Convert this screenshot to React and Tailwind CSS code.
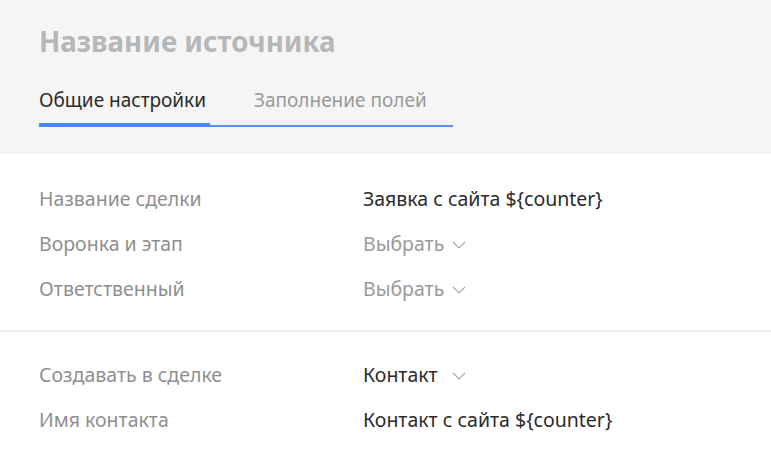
import React from 'react';

const Chevron = ({ className = 'ml-2' }) => (
  <svg width="14" height="8" viewBox="0 0 14 8" fill="none" className={`${className} mt-[2px]`}>
    <path d="M1 1l6 6 6-6" stroke="#a8a8a8" strokeWidth="1.2" />
  </svg>
);

const Row = ({ label, children }) => (
  <div className="flex items-center h-[45px]">
    <div className="w-[324px] text-[#8f8f8f]">{label}</div>
    <div className="flex items-center">{children}</div>
  </div>
);

export default function App() {
  return (
    <div className="w-[771px] h-[456px] bg-white overflow-hidden text-[19.5px]" style={{ fontFamily: '"Noto Sans", "Open Sans", sans-serif' }}>
      {/* Header */}
      <div className="bg-[#f5f5f5] h-[154px] px-[39px] pt-[21px]">
        <h1 className="text-[27.7px] font-bold text-[#b7b7b7] leading-[40px]">Название источника</h1>
        <div className="flex mt-[25px] w-[414px] border-b-2 border-[#5b93f2]">
          <div className="w-[171px] pb-[9px] border-b-4 border-[#4a88f2] -mb-[2px] text-[#2b2b2b] text-[19px] leading-[28px]">
            Общие настройки
          </div>
          <div className="ml-[44px] pb-[9px] text-[#999999] text-[19px] leading-[28px]">Заполнение полей</div>
        </div>
      </div>

      {/* Deal settings */}
      <div className="px-[39px] pt-[22px] pb-[19px]">
        <Row label="Название сделки">
          <span className="text-[#2b2b2b]">Заявка с сайта ${'{counter}'}</span>
        </Row>
        <Row label="Воронка и этап">
          <span className="text-[#9a9a9a]">Выбрать</span>
          <Chevron />
        </Row>
        <Row label="Ответственный">
          <span className="text-[#9a9a9a]">Выбрать</span>
          <Chevron />
        </Row>
      </div>

      <div className="h-[2px] bg-[#ececec]" />

      {/* Contact settings */}
      <div className="px-[39px] pt-[20px]">
        <Row label="Создавать в сделке">
          <span className="text-[#2b2b2b]">Контакт</span>
          <Chevron className="ml-[14px]" />
        </Row>
        <Row label="Имя контакта">
          <span className="text-[#2b2b2b]">Контакт с сайта ${'{counter}'}</span>
        </Row>
      </div>
    </div>
  );
}
